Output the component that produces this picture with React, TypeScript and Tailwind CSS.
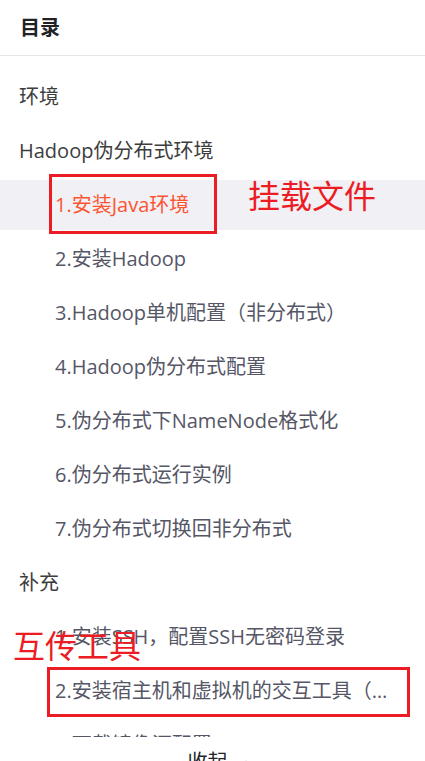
import { ChevronUp } from "lucide-react";

type TocItem = {
  label: string;
  level: 1 | 2;
  active?: boolean;
};

const items: TocItem[] = [
  { label: "环境", level: 1 },
  { label: "Hadoop伪分布式环境", level: 1 },
  { label: "1.安装Java环境", level: 2, active: true },
  { label: "2.安装Hadoop", level: 2 },
  { label: "3.Hadoop单机配置（非分布式）", level: 2 },
  { label: "4.Hadoop伪分布式配置", level: 2 },
  { label: "5.伪分布式下NameNode格式化", level: 2 },
  { label: "6.伪分布式运行实例", level: 2 },
  { label: "7.伪分布式切换回非分布式", level: 2 },
  { label: "补充", level: 1 },
  { label: "1.安装SSH，配置SSH无密码登录", level: 2 },
  { label: "2.安装宿主机和虚拟机的交互工具（VMware Tools）", level: 2 },
  { label: "3.下载镜像源配置", level: 2 },
  { label: "4.共享文件夹", level: 2 },
];

const font = "font-['Open_Sans','Noto_Sans_CJK_SC',sans-serif]";

function TocRow({ item }: { item: TocItem }) {
  return (
    <li
      className={
        "h-[50px] mb-1 flex items-center pr-[26px] " +
        (item.level === 1 ? "pl-[19px] text-[#3d3d3d] " : "pl-[55px] text-[#555666] ") +
        (item.active ? "bg-[#f0f0f5] !text-[#fc5531]" : "")
      }
    >
      <span className="block truncate text-[20px] leading-[26px]">{item.label}</span>
    </li>
  );
}

export default function App() {
  return (
    <div className={`relative w-[425px] h-[761px] overflow-hidden bg-white ${font}`}>
      <div className="h-[56px] border-b border-[#e5e5e5] flex items-center px-5">
        <h2 className="text-[20px] font-bold text-[#222226] leading-none">目录</h2>
      </div>

      <ul className="pt-4">
        {items.map((item) => (
          <TocRow key={item.label} item={item} />
        ))}
      </ul>

      {/* collapse bar */}
      <div className="absolute left-0 right-0 top-[737px] h-[40px] bg-white flex justify-center pt-[12px] pl-[14px]">
        <button type="button" className="flex items-start gap-3 text-[20px] leading-[26px] text-[#222226]">
          收起
          <ChevronUp className="w-3 h-3 mt-[8px]" strokeWidth={3} />
        </button>
      </div>

      {/* annotations */}
      <div className="absolute left-[49px] top-[174px] w-[168px] h-[60px] border-[3px] border-[#ec1c24]" />
      <div className="absolute left-[248px] top-[176px] text-[32px] leading-[40px] text-[#ec1c24]">挂载文件</div>

      <div className="absolute left-[47px] top-[667px] w-[363px] h-[50px] border-[3px] border-[#ec1c24]" />
      <div className="absolute left-[13px] top-[626px] text-[32px] leading-[40px] text-[#ec1c24]">互传工具</div>
    </div>
  );
}
